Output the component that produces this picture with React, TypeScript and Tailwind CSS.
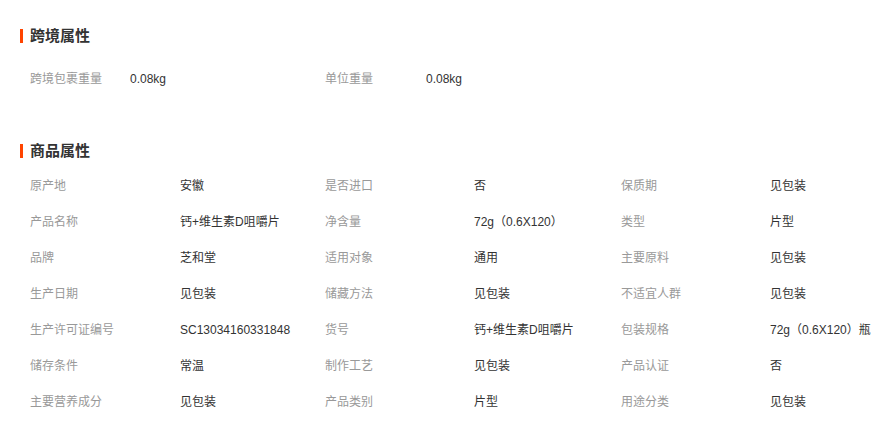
const crossRows = [["跨境包裹重量", "0.08kg", "单位重量", "0.08kg"]];

const attrRows = [
  ["原产地", "安徽", "是否进口", "否", "保质期", "见包装"],
  ["产品名称", "钙+维生素D咀嚼片", "净含量", "72g（0.6X120）", "类型", "片型"],
  ["品牌", "芝和堂", "适用对象", "通用", "主要原料", "见包装"],
  ["生产日期", "见包装", "储藏方法", "见包装", "不适宜人群", "见包装"],
  ["生产许可证编号", "SC13034160331848", "货号", "钙+维生素D咀嚼片", "包装规格", "72g（0.6X120）瓶"],
  ["储存条件", "常温", "制作工艺", "见包装", "产品认证", "否"],
  ["主要营养成分", "见包装", "产品类别", "片型", "用途分类", "见包装"],
];

const Title = ({ text }: { text: string }) => (
  <div className="flex h-5 items-center">
    <div className="h-[14px] w-[3px] bg-[#ff4400]" />
    <div className="ml-[7px] text-[15px] font-bold leading-5 text-[#333]">{text}</div>
  </div>
);

const App = () => (
  <div
    className="h-[432px] w-[889px] overflow-hidden bg-white pl-5 pt-[26px]"
    style={{ fontFamily: '"Liberation Sans", "Noto Sans CJK SC", sans-serif' }}
  >
    <Title text="跨境属性" />
    <div className="mt-[15px] pl-[10px]">
      {crossRows.map((r, i) => (
        <div key={i} className="grid h-9 grid-cols-[100px_195px_101px_1fr] items-center text-[12px]">
          <div className="text-[#999]">{r[0]}</div>
          <div className="text-[#333]">{r[1]}</div>
          <div className="text-[#999]">{r[2]}</div>
          <div className="text-[#333]">{r[3]}</div>
        </div>
      ))}
    </div>

    <div className="mt-[44px]">
      <Title text="商品属性" />
    </div>
    <div className="mt-[7px] pl-[10px]">
      {attrRows.map((r, i) => (
        <div
          key={i}
          className="grid h-9 grid-cols-[150px_145px_149px_147px_149px_1fr] items-center whitespace-nowrap text-[12px]"
        >
          {r.map((c, j) => (
            <div key={j} className={j % 2 === 0 ? "text-[#999]" : "text-[#333]"}>
              {c}
            </div>
          ))}
        </div>
      ))}
    </div>
  </div>
);

export default App;
